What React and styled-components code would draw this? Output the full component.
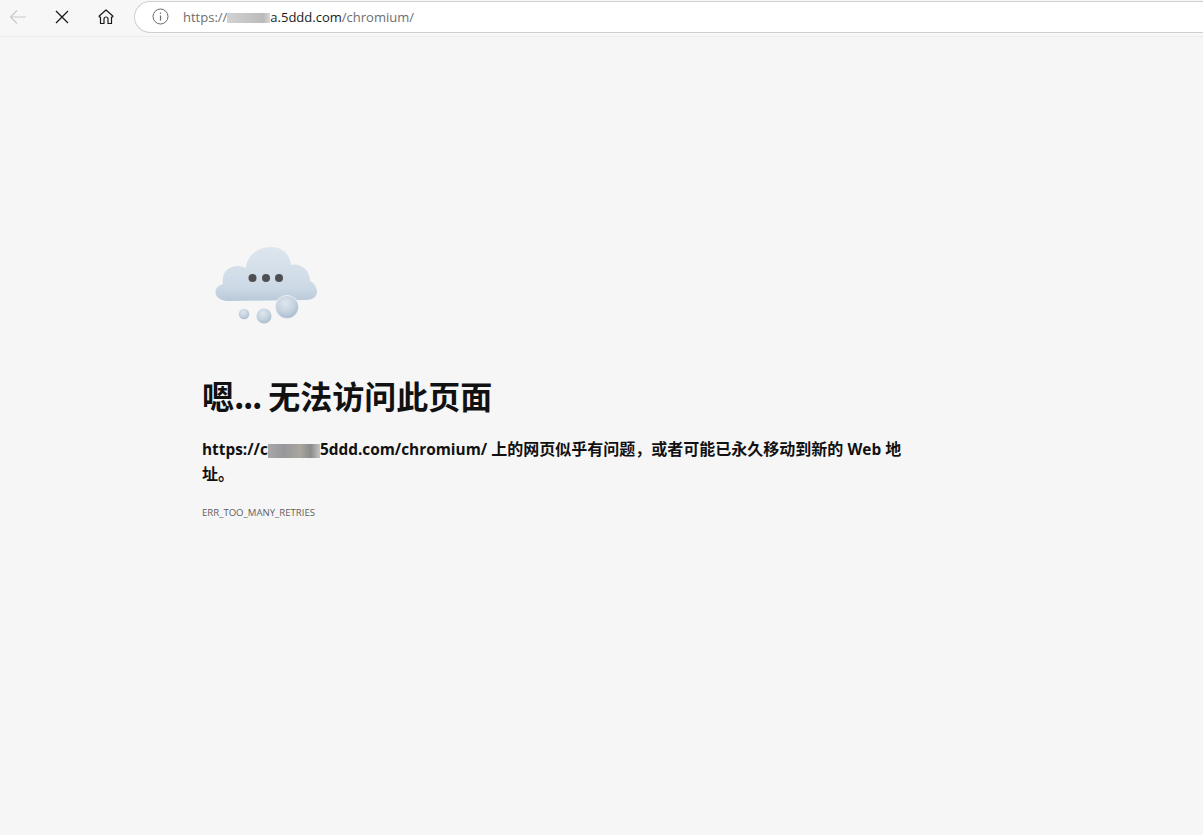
import React from "react";
import styled, { createGlobalStyle } from "styled-components";

const GlobalStyle = createGlobalStyle`
  html, body {
    margin: 0;
    padding: 0;
    background: #f6f6f6;
  }
  body {
    font-family: "Open Sans", "Noto Sans CJK SC", sans-serif;
  }
`;

const Page = styled.div`
  width: 1203px;
  height: 835px;
  overflow: hidden;
  background: #f6f6f6;
`;

const Toolbar = styled.header`
  height: 36px;
  display: flex;
  align-items: center;
  background: #f7f7f7;
  border-bottom: 1px solid #ececec;
`;

const NavGroup = styled.nav`
  display: flex;
  align-items: center;
  margin: -2px 6px 0 -4px;
`;

const NavButton = styled.button`
  width: 44px;
  height: 34px;
  padding: 0;
  border: 0;
  background: none;
  display: flex;
  align-items: center;
  justify-content: center;
  color: ${(p) => (p.$disabled ? "#c9c9c9" : "#1a1a1a")};
`;

const AddressBar = styled.div`
  flex: 1;
  height: 30px;
  margin-top: -3px;
  display: flex;
  align-items: center;
  gap: 14px;
  padding-left: 17px;
  background: #fff;
  border: 1px solid #cfcfcf;
  border-right: 0;
  border-radius: 16px 0 0 16px;
`;

const Url = styled.div`
  font-family: "Open Sans", sans-serif;
  font-size: 13px;
  color: #6e6e6e;
  white-space: nowrap;
`;

const Host = styled.span`
  color: #1c1c1c;
`;

const Redacted = styled.span`
  display: inline-block;
  vertical-align: middle;
  width: ${(p) => p.$width}px;
  height: ${(p) => p.$height}px;
  background: ${(p) =>
    p.$dark
      ? "linear-gradient(90deg, #a8a8a8, #97979c 30%, #a9a69e 62%, #8b8b8b 82%, #c4c4c4)"
      : "linear-gradient(90deg, #d2d2d2, #c4c4c4 50%, #bbbbbb 85%, #d8d8d8)"};
  filter: blur(0.7px);
`;

const Content = styled.main`
  padding: 198px 0 0 202px;
`;

const Cloud = styled.svg`
  display: block;
  width: 130px;
  height: 100px;
  margin-left: -2px;
`;

const Title = styled.h1`
  margin: 36px 0 0;
  font-family: "Noto Sans CJK SC", sans-serif;
  font-size: 32px;
  line-height: 48px;
  font-weight: 700;
  color: #111;
`;

const Dots = styled.span`
  letter-spacing: -1.4px;
`;

const Message = styled.p`
  width: 704px;
  margin: 18px 0 0;
  font-family: "Open Sans", "Noto Sans CJK SC", sans-serif;
  font-size: 16px;
  line-height: 25px;
  font-weight: 700;
  color: #111;
`;

const Latin = styled.span`
  font-size: 15.4px;
`;

const ErrorCode = styled.div`
  margin-top: 19px;
  font-family: "Open Sans", sans-serif;
  font-size: 9.6px;
  line-height: 14px;
  color: #5f5f5f;
`;

const CloudIcon = () => (
  <Cloud viewBox="0 0 130 100">
    <defs>
      <linearGradient id="body" x1="0" y1="0" x2="0" y2="1">
        <stop offset="0" stopColor="#dde6ee" />
        <stop offset="0.75" stopColor="#ccd9e5" />
        <stop offset="1" stopColor="#b9c9d9" />
      </linearGradient>
      <radialGradient id="ball" cx="0.42" cy="0.32" r="0.8">
        <stop offset="0" stopColor="#dfe7ef" />
        <stop offset="0.6" stopColor="#c0cedc" />
        <stop offset="1" stopColor="#9db0c3" />
      </radialGradient>
      <filter id="soft">
        <feGaussianBlur stdDeviation="0.7" />
      </filter>
    </defs>
    <g filter="url(#soft)">
      <path
        fill="url(#body)"
        d="M28 66 C18 66 15 60 15.5 56 C16 52 20 50 23 49 C21 38 28 31 38 31 C41 31 44 32 46 33 C47 20 58 12 71 12 C82 12 90 19 91 30 C98 28 110 33 110 46 C114 48 117 52 117 57 C117 62 112 65 106 65 Z"
      />
      <circle cx="87" cy="72" r="12" fill="#e6ecf2" />
      <circle cx="87" cy="72" r="11" fill="url(#ball)" />
      <circle cx="64" cy="81" r="7.5" fill="url(#ball)" />
      <circle cx="44" cy="79" r="5.3" fill="url(#ball)" />
      <circle cx="52.5" cy="43" r="4" fill="#4f4f52" />
      <circle cx="66" cy="43" r="4" fill="#4f4f52" />
      <circle cx="79" cy="43" r="4" fill="#4f4f52" />
    </g>
  </Cloud>
);

export default function App() {
  return (
    <Page>
      <GlobalStyle />
      <Toolbar>
        <NavGroup>
          <NavButton $disabled>
            <svg width="18" height="16" viewBox="0 0 18 16" fill="none" stroke="currentColor" strokeWidth="1.1">
              <path d="M17 8H1.5M8 1.5 1.5 8 8 14.5" />
            </svg>
          </NavButton>
          <NavButton>
            <svg width="14" height="14" viewBox="0 0 14 14" fill="none" stroke="currentColor" strokeWidth="1.3">
              <path d="M1 1 13 13M13 1 1 13" />
            </svg>
          </NavButton>
          <NavButton>
            <svg width="16" height="16" viewBox="0 0 16 16" fill="none" stroke="currentColor" strokeWidth="1.2">
              <path d="M1.2 7 8 1l6.8 6v0.8L13.5 8v6.5h-3.5V10a2 2 0 0 0-4 0v4.5H2.5V8L1.2 7.8Z" strokeLinejoin="round" />
            </svg>
          </NavButton>
        </NavGroup>
        <AddressBar>
          <svg width="17" height="17" viewBox="0 0 17 17" fill="none" stroke="#6a6a6a" strokeWidth="1">
            <circle cx="8.5" cy="8.5" r="7.5" />
            <path d="M8.5 7.5v5M8.5 4.5v1.3" strokeWidth="1.2" />
          </svg>
          <Url>
            https://
            <Redacted $width={43} $height={10} />
            <Host>a.5ddd.com</Host>/chromium/
          </Url>
        </AddressBar>
      </Toolbar>
      <Content>
        <CloudIcon />
        <Title>
          嗯<Dots>...</Dots> 无法访问此页面
        </Title>
        <Message>
          <Latin>https://c</Latin>
          <Redacted $dark $width={52} $height={14} />
          <Latin>5ddd.com/chromium/</Latin> 上的网页似乎有问题，或者可能已永久移动到新的 <Latin>Web</Latin> 地址。
        </Message>
        <ErrorCode>ERR_TOO_MANY_RETRIES</ErrorCode>
      </Content>
    </Page>
  );
}
